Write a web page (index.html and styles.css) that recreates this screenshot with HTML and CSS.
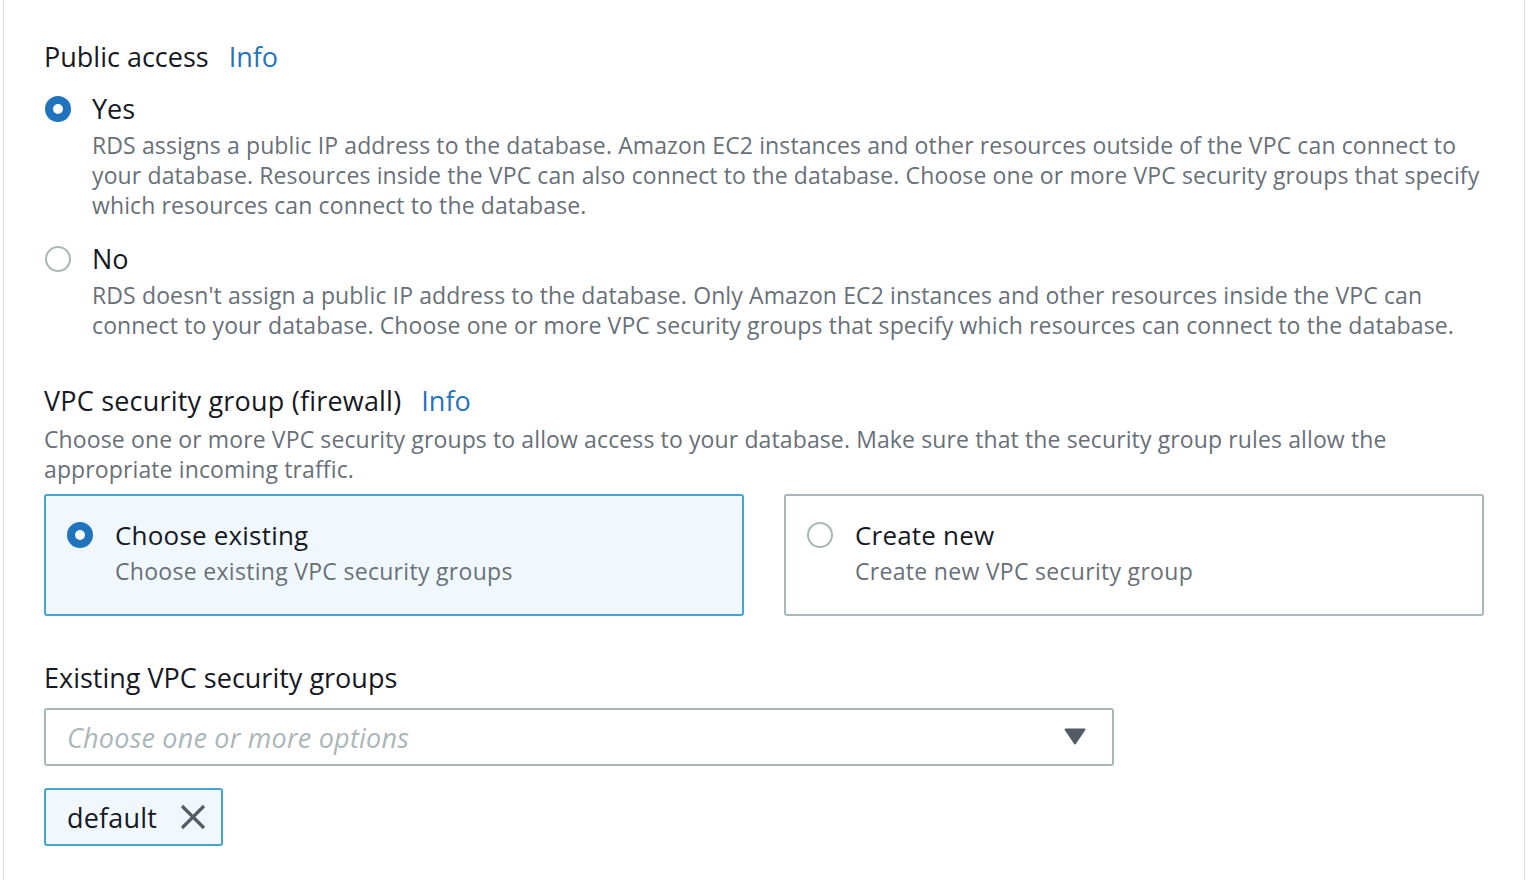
FILE: index.html
```html
<!DOCTYPE html>
<html lang="en">
<head>
<meta charset="utf-8">
<title>Connectivity</title>
<link rel="stylesheet" href="styles.css">
</head>
<body>
<div class="panel">
  <section class="field">
    <div class="label-row"><span class="label">Public access</span><a class="info">Info</a></div>
    <div class="radio-group">
      <div class="radio-item">
        <span class="radio checked"></span>
        <div class="radio-body">
          <div class="radio-title">Yes</div>
          <div class="radio-desc">RDS assigns a public IP address to the database. Amazon EC2 instances and other resources outside of the VPC can connect to your database. Resources inside the VPC can also connect to the database. Choose one or more VPC security groups that specify which resources can connect to the database.</div>
        </div>
      </div>
      <div class="radio-item">
        <span class="radio"></span>
        <div class="radio-body">
          <div class="radio-title">No</div>
          <div class="radio-desc">RDS doesn't assign a public IP address to the database. Only Amazon EC2 instances and other resources inside the VPC can connect to your database. Choose one or more VPC security groups that specify which resources can connect to the database.</div>
        </div>
      </div>
    </div>
  </section>

  <section class="field vpc">
    <div class="label-row"><span class="label">VPC security group (firewall)</span><a class="info">Info</a></div>
    <div class="field-desc">Choose one or more VPC security groups to allow access to your database. Make sure that the security group rules allow the appropriate incoming traffic.</div>
    <div class="tiles">
      <div class="tile selected">
        <span class="radio checked"></span>
        <div class="tile-body">
          <div class="tile-title">Choose existing</div>
          <div class="tile-desc">Choose existing VPC security groups</div>
        </div>
      </div>
      <div class="tile">
        <span class="radio"></span>
        <div class="tile-body">
          <div class="tile-title">Create new</div>
          <div class="tile-desc">Create new VPC security group</div>
        </div>
      </div>
    </div>
  </section>

  <section class="field existing">
    <div class="label-row"><span class="label">Existing VPC security groups</span></div>
    <div class="select">
      <span class="placeholder">Choose one or more options</span>
      <svg class="caret" width="22" height="18" viewBox="0 0 22 18"><path d="M1.5 1.5 H20.5 L11 15.5 Z" fill="#545b64" stroke="#545b64" stroke-width="2" stroke-linejoin="round"/></svg>
    </div>
    <div class="tokens">
      <div class="token">
        <span class="token-label">default</span>
        <svg class="dismiss" width="26" height="26" viewBox="0 0 26 26"><path d="M2 2 L24 24 M24 2 L2 24" stroke="#545b64" stroke-width="3.2" fill="none"/></svg>
      </div>
    </div>
  </section>
</div>
</body>
</html>
```
FILE: styles.css
```css
* { box-sizing: border-box; }
html, body { margin: 0; padding: 0; background: #ffffff; }
body {
  font-family: "Open Sans", "Noto Sans", sans-serif;
  color: #16191f;
  width: 1528px;
  height: 880px;
  overflow: hidden;
}
.panel {
  margin-left: 3px;
  width: 1522px;
  height: 880px;
  border-left: 1px solid #dcdfe0;
  border-right: 1px solid #dcdfe0;
  padding: 39px 40px 0 40px;
}
.label-row {
  display: flex;
  align-items: baseline;
  gap: 20px;
  line-height: 36px;
  height: 36px;
}
.label { font-size: 27px; color: #16191f; }
.vpc .label { letter-spacing: 0.2px; }
.info { font-size: 27px; color: #1f74bd; text-decoration: none; }

.radio-group { display: flex; flex-direction: column; gap: 21px; margin-top: 16px; }
.radio-item { display: flex; gap: 21px; }
.radio {
  flex: none;
  width: 26px;
  height: 26px;
  border-radius: 50%;
  border: 2px solid #aab7b8;
  background: #fff;
  margin-top: 5px;
}
.radio-item .radio { margin-left: 1px; }
.radio.checked {
  border: 8px solid #1f74bd;
  background: #fff;
}
.radio-title { font-size: 27px; line-height: 36px; color: #16191f; }
.radio-desc {
  font-size: 23px;
  line-height: 30px;
  color: #687078;
  margin-top: 3px;
  letter-spacing: 0.12px;
}

.vpc { margin-top: 43px; }
.field-desc {
  font-size: 23px;
  line-height: 30px;
  color: #687078;
  margin-top: 5px;
  letter-spacing: 0.12px;
}
.tiles {
  display: grid;
  grid-template-columns: 1fr 1fr;
  gap: 40px;
  margin-top: 10px;
}
.tile {
  height: 122px;
  border: 2px solid #aab7b8;
  border-radius: 3px;
  padding: 21px 21px;
  display: flex;
  gap: 22px;
  background: #fff;
}
.tile.selected {
  border-color: #44a6cf;
  background: #f1f8fd;
}
.tile .radio { margin-top: 5px; }
.tile-title { font-size: 26px; line-height: 36px; color: #16191f; letter-spacing: 0.2px; }
.tile-desc { font-size: 23px; line-height: 36px; color: #687078; letter-spacing: 0.3px; }

.existing { margin-top: 44px; }
.select {
  margin-top: 12px;
  width: 1070px;
  height: 58px;
  border: 2px solid #aab7b8;
  border-radius: 3px;
  display: flex;
  align-items: center;
  justify-content: space-between;
  padding: 0 26px 0 21px;
}
.placeholder { font-size: 27px; font-style: italic; color: #aab7b8; letter-spacing: 0.2px; }
.caret { display: block; }
.tokens { margin-top: 22px; display: flex; }
.token {
  height: 58px;
  border: 2px solid #44a6cf;
  border-radius: 3px;
  background: #f1f8fd;
  display: flex;
  align-items: center;
  gap: 23px;
  padding: 0 15px 0 21px;
}
.token-label { font-size: 27px; color: #16191f; letter-spacing: 0.2px; }
.dismiss { display: block; }
```
